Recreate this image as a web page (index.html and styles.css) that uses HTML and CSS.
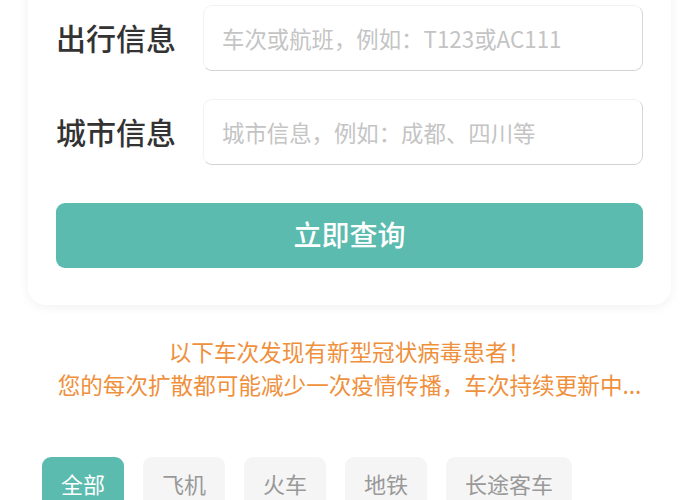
FILE: index.html
```html
<!DOCTYPE html>
<html lang="zh">
<head>
<meta charset="utf-8">
<link rel="stylesheet" href="styles.css">
</head>
<body>
<div class="page">
  <div class="card">
    <div class="row">
      <label class="label">出行信息</label>
      <input class="field" type="text" placeholder="车次或航班，例如：T123或AC111">
    </div>
    <div class="row">
      <label class="label">城市信息</label>
      <input class="field" type="text" placeholder="城市信息，例如：成都、四川等">
    </div>
    <button class="btn">立即查询</button>
  </div>
  <div class="notice">
    <p>以下车次发现有新型冠状病毒患者！</p>
    <p>您的每次扩散都可能减少一次疫情传播，车次持续更新中...</p>
  </div>
  <div class="tabs">
    <span class="tab active">全部</span>
    <span class="tab">飞机</span>
    <span class="tab">火车</span>
    <span class="tab">地铁</span>
    <span class="tab">长途客车</span>
  </div>
</div>
</body>
</html>
```

FILE: styles.css
```css
* { box-sizing: border-box; }
html, body { margin: 0; padding: 0; background: #fff; overflow: hidden; }
body {
  font-family: "Noto Sans CJK SC", "Noto Sans", sans-serif;
  color: #333;
}
.page {
  padding: 0 29px 0 28px;
}
.card {
  margin-top: -40px;
  padding: 45px 28px 37px 28px;
  background: #fff;
  border-radius: 18px;
  box-shadow: 0 2px 12px rgba(0,0,0,0.06);
  display: flex;
  flex-direction: column;
}
.row {
  display: flex;
  align-items: center;
  margin-bottom: 28px;
}
.label {
  width: 147px;
  flex: none;
  font-size: 30px;
  font-weight: 500;
  color: #333;
  line-height: 1;
  padding-bottom: 3px;
}
.field {
  flex: 1;
  height: 66px;
  border: 1px solid #f2f2f2;
  border-right-color: #d6d6d6;
  border-bottom-color: #d2d2d2;
  border-radius: 9px;
  padding: 0 0 0 18px;
  font-family: inherit;
  font-size: 22.4px;
  color: #333;
  background: #fff;
  outline: none;
}
.field::placeholder { color: #c4c4c4; }
.btn {
  margin-top: 10px;
  height: 65px;
  border: none;
  border-radius: 9px;
  background: #5bbbae;
  color: #fff;
  font-family: inherit;
  font-size: 28px;
  font-weight: 500;
  padding: 0 0 3px 0;
}
.notice {
  margin-top: 30px;
  text-align: center;
  color: #ef903c;
  font-size: 22.6px;
  line-height: 33px;
}
.notice p { margin: 0; }
.tabs {
  margin-top: 56px;
  padding-left: 14px;
  display: flex;
  gap: 19px;
}
.tab {
  height: 52px;
  padding: 0 19px;
  display: flex;
  align-items: center;
  border-radius: 9px;
  background: #f5f5f5;
  color: #999;
  font-size: 22px;
}
.tab.active {
  background: #5bbbae;
  color: #fff;
}
```
